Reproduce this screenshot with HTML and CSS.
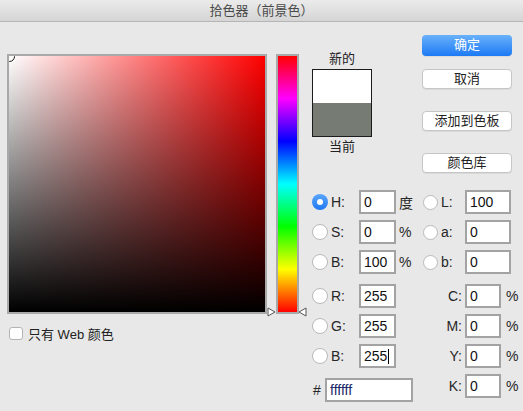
FILE: index.html
```html
<!DOCTYPE html>
<html lang="zh_cn">
<head>
  <meta charset="UTF-8">
  <meta name="viewport" content="width=device-width, initial-scale=1.0">
  <title>拾色器（前景色）</title>
  <link rel="stylesheet" href="styles.css">
</head>
<body>
  <div class="window">
    <div class="titlebar">拾色器（前景色）</div>
    <div class="dialog">
      <div class="picker">
        <div class="picker-row">
          <div class="field">
            <span class="marker"></span>
          </div>
          <div class="hue-wrap">
            <div class="hue"></div>
            <svg class="arrow arrow-left" width="9" height="10" viewBox="0 0 9 10"><path d="M1 1 L8 5 L1 9 Z" fill="#fff" stroke="#555" stroke-width="1"/></svg>
            <svg class="arrow arrow-right" width="9" height="10" viewBox="0 0 9 10"><path d="M8 1 L1 5 L8 9 Z" fill="#fff" stroke="#555" stroke-width="1"/></svg>
          </div>
        </div>
        <div class="web-only">
          <span class="checkbox"></span>
          <span>只有 Web 颜色</span>
        </div>
      </div>

      <div class="panel">
        <div class="panel-top">
          <div class="swatch-col">
            <div class="swatch-label">新的</div>
            <div class="swatch">
              <div class="swatch-new"></div>
              <div class="swatch-cur"></div>
            </div>
            <div class="swatch-label cur">当前</div>
          </div>
          <div class="buttons">
            <div class="btn primary">确定</div>
            <div class="btn">取消</div>
            <div class="btn">添加到色板</div>
            <div class="btn">颜色库</div>
          </div>
        </div>

        <div class="fields">
          <div class="col-left">
            <div class="group">
              <div class="row"><span class="radio on"></span><span class="lbl">H:</span><span class="input w37">0</span><span class="unit">度</span></div>
              <div class="row"><span class="radio"></span><span class="lbl">S:</span><span class="input w37">0</span><span class="unit">%</span></div>
              <div class="row"><span class="radio"></span><span class="lbl">B:</span><span class="input w37">100</span><span class="unit">%</span></div>
            </div>
            <div class="group">
              <div class="row"><span class="radio"></span><span class="lbl">R:</span><span class="input w37">255</span></div>
              <div class="row"><span class="radio"></span><span class="lbl">G:</span><span class="input w37">255</span></div>
              <div class="row"><span class="radio"></span><span class="lbl">B:</span><span class="input w37">255<i class="caret"></i></span></div>
            </div>
            <div class="row hex-row"><span class="hash">#</span><span class="input w88">ffffff</span></div>
          </div>
          <div class="col-right">
            <div class="group">
              <div class="row"><span class="radio"></span><span class="lbl sm">L:</span><span class="input w46">100</span></div>
              <div class="row"><span class="radio"></span><span class="lbl sm">a:</span><span class="input w46">0</span></div>
              <div class="row"><span class="radio"></span><span class="lbl sm">b:</span><span class="input w46">0</span></div>
            </div>
            <div class="group">
              <div class="row"><span class="lbl-r">C:</span><span class="input w36">0</span><span class="unit pct">%</span></div>
              <div class="row"><span class="lbl-r">M:</span><span class="input w36">0</span><span class="unit pct">%</span></div>
              <div class="row"><span class="lbl-r">Y:</span><span class="input w36">0</span><span class="unit pct">%</span></div>
              <div class="row"><span class="lbl-r">K:</span><span class="input w36">0</span><span class="unit pct">%</span></div>
            </div>
          </div>
        </div>
      </div>
    </div>
  </div>
</body>
</html>
```

FILE: styles.css
```css
*{
  box-sizing: border-box;
}
body{
  margin: 0;
  background: #e8e8e8;
  font-family: "Liberation Sans", "Noto Sans CJK SC", sans-serif;
  color: #262626;
}
.window{
  width: 523px;
  height: 411px;
  overflow: hidden;
}
.titlebar{
  height: 22px;
  line-height: 21px;
  text-align: center;
  font-size: 13px;
  color: #4a4a4a;
  background: linear-gradient(#ebebeb, #d5d5d5);
  border-bottom: 1px solid #b5b5b5;
}
.dialog{
  display: flex;
  align-items: flex-start;
  padding-left: 7px;
}

/* 左侧取色区 */
.picker{
  padding-top: 32px;
}
.picker-row{
  display: flex;
}
.field{
  position: relative;
  width: 260px;
  height: 260px;
  border: 2px solid #a9a9a9;
  overflow: hidden;
  background:
    linear-gradient(to top, #000, rgba(0,0,0,0)),
    linear-gradient(to right, #fff, #f00);
}
.marker{
  position: absolute;
  left: -5px;
  top: -5px;
  width: 11px;
  height: 11px;
  border: 1.5px solid #1a1a1a;
  border-radius: 50%;
}
.hue-wrap{
  position: relative;
  margin-left: 9px;
  width: 23px;
  height: 260px;
}
.hue{
  width: 23px;
  height: 260px;
  border: 2px solid #a9a9a9;
  background: linear-gradient(#f00, #f0f 16.6%, #00f 33.3%, #0ff 50%, #0f0 66.6%, #ff0 83.3%, #f00);
}
.arrow{
  position: absolute;
  top: 253px;
}
.arrow-left{
  left: -9px;
}
.arrow-right{
  right: -8px;
}
.web-only{
  display: flex;
  align-items: center;
  margin-top: 10px;
  padding-left: 2px;
  font-size: 13px;
  color: #222;
}
.checkbox{
  width: 14px;
  height: 13px;
  margin-right: 5px;
  background: #fff;
  border: 1px solid #b4b4b4;
  border-radius: 3px;
}

/* 右侧面板 */
.panel{
  padding-top: 13px;
}
.panel-top{
  display: flex;
  align-items: flex-start;
}
.swatch-col{
  margin-left: 13px;
  width: 60px;
  padding-top: 16px;
  text-align: center;
}
.swatch-label{
  font-size: 13px;
  line-height: 16px;
  color: #222;
}
.swatch-label.cur{
  margin-top: 2px;
}
.swatch{
  margin-top: 2px;
  height: 68px;
  border: 1px solid #1c1c1c;
}
.swatch-new{
  height: 33px;
  background: #fff;
}
.swatch-cur{
  height: 33px;
  background: #767c73;
}
.buttons{
  margin-left: 50px;
  width: 90px;
}
.btn{
  height: 20px;
  line-height: 18px;
  margin-top: 22px;
  text-align: center;
  font-size: 13px;
  color: #222;
  background: #fff;
  border: 1px solid #c6c6c6;
  border-radius: 4px;
  box-shadow: 0 1px 0 rgba(0,0,0,0.06);
}
.btn.primary{
  height: 21px;
  line-height: 20px;
  margin-top: 0;
  color: #fff;
  border: none;
  background: linear-gradient(#69b1fa, #1d7af5);
}
.btn.primary + .btn{
  margin-top: 13px;
}

/* 数值区 */
.fields{
  display: flex;
  margin-top: 17px;
  margin-left: 13px;
  font-size: 14px;
}
.col-left{
  width: 111px;
}
.group + .group,
.hex-row{
  margin-top: 10px;
}
.row{
  display: flex;
  align-items: center;
  height: 24px;
}
.row + .row{
  margin-top: 6px;
}
.radio{
  width: 16px;
  height: 16px;
  background: #fff;
  border: 1px solid #b9b9b9;
  border-radius: 50%;
}
.col-right .radio{
  width: 15px;
  height: 15px;
}
.radio.on{
  position: relative;
  border: none;
  background: linear-gradient(#5aa6fb, #1e78f2);
}
.radio.on::after{
  content: "";
  position: absolute;
  left: 5px;
  top: 5px;
  width: 6px;
  height: 6px;
  border-radius: 50%;
  background: #fff;
}
.lbl{
  width: 31px;
  padding-left: 3px;
}
.lbl.sm{
  width: 27px;
}
.lbl-r{
  width: 42px;
  padding-right: 3px;
  text-align: right;
}
.input{
  position: relative;
  height: 24px;
  line-height: 20px;
  padding-left: 3px;
  background: #fff;
  border: 2px solid #a3a3a3;
  color: #111;
}
.w36{ width: 36px; }
.w37{ width: 37px; }
.w46{ width: 46px; }
.w88{ width: 88px; }
.unit{
  margin-left: 3px;
}
.unit.pct{
  margin-left: 5px;
}
.caret{
  display: inline-block;
  width: 1px;
  height: 15px;
  margin-left: 1px;
  vertical-align: -3px;
  background: #000;
}
.hash{
  width: 13px;
  padding-left: 1px;
}
.input.w88{
  color: #1a2a6a;
}
```
